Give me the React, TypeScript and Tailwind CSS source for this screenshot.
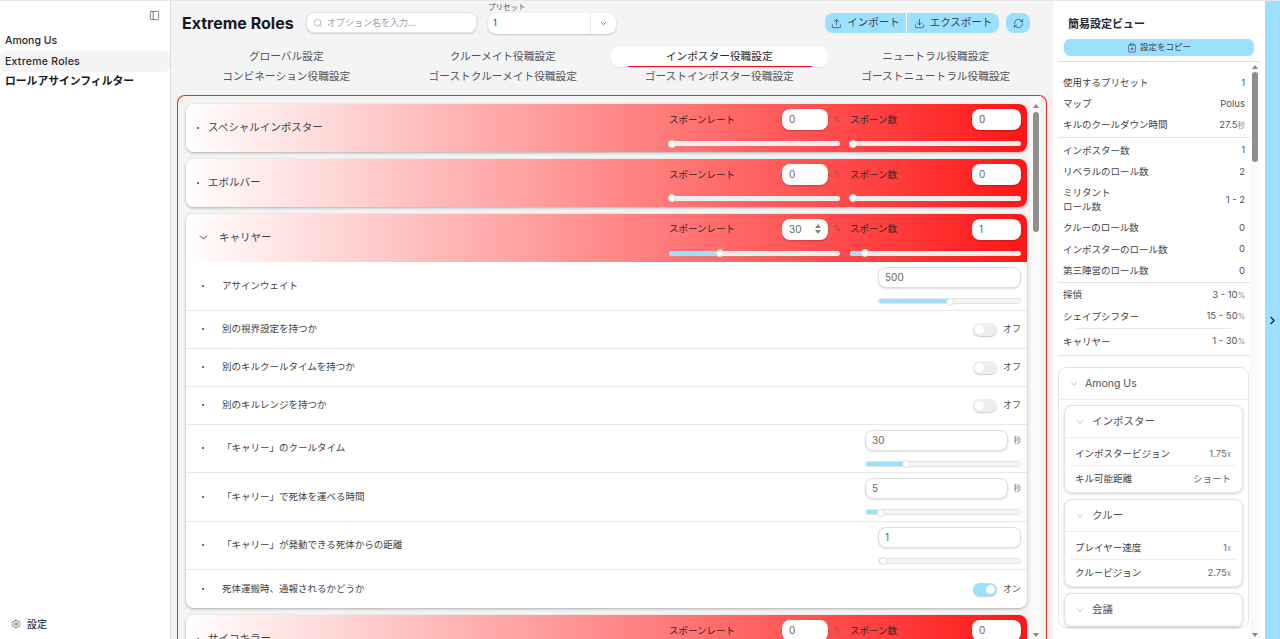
import { ChevronDown, ChevronRight, PanelLeft, Search, Settings, Upload, Download, RefreshCw, ClipboardPlus } from "lucide-react";
import type { ReactNode } from "react";

const FONT = { fontFamily: "Inter, 'Noto Sans CJK JP', sans-serif" };

function Slider({ pct, track = "bg-[#eeeeee]" }: { pct: number; track?: string }) {
  return (
    <div className={`relative h-[5px] w-full rounded-full ${track}`}>
      <div className="h-full rounded-full bg-[#9be0ff]" style={{ width: `${pct}%` }} />
      <div
        className="absolute top-[-1.5px] h-2 w-2 rounded-full border border-[#dddddd] bg-white"
        style={{ left: `calc(${pct}% - 4px)` }}
      />
    </div>
  );
}

function SpawnCol({ label, value, pct, unit, spin, inputClass }: { label: string; value: string; pct: number; unit?: string; spin?: boolean; inputClass: string }) {
  return (
    <div className="flex flex-col">
      <div className="flex h-[21px] items-center">
        <span className="flex-1 pt-[1px] text-[9.5px] text-[#27272a]">{label}</span>
        <div className={`flex h-[21px] items-center justify-between rounded-lg bg-white pl-[7px] pr-[7px] text-[10px] text-[#666666] shadow-[0_1px_2px_rgba(0,0,0,0.25)] ${inputClass}`}>
          <span>{value}</span>
          {spin && (
            <span className="flex flex-col gap-[2px]">
              <span className="h-0 w-0 border-x-[3px] border-b-[4px] border-x-transparent border-b-[#888888]" />
              <span className="h-0 w-0 border-x-[3px] border-t-[4px] border-x-transparent border-t-[#888888]" />
            </span>
          )}
        </div>
        {unit && <span className="ml-[5px] w-[7px] text-[7.5px] text-[#8a5a5a]">{unit}</span>}
      </div>
      <div className="mt-[11px]">
        <Slider pct={pct} track="bg-[#eeeeee]" />
      </div>
    </div>
  );
}

function RoleHead({ name, open, rate, num, ratePct, numPct, spin }: { name: string; open?: boolean; rate: string; num: string; ratePct: number; numPct: number; spin?: boolean }) {
  return (
    <div className={`flex shrink-0 items-start bg-[linear-gradient(90deg,#ffffff,#ff1616)] ${open ? "h-[48.5px] rounded-t-lg" : "h-[48px] rounded-lg shadow-[0_1px_3px_rgba(0,0,0,0.3)]"}`}>
      <div className="flex h-full flex-1 items-center text-[10.5px] text-[#3f3f46]">
        {open ? (
          <>
            <ChevronDown size={13} strokeWidth={1.8} className="ml-[11px] mr-[9px] text-[#3f3f46]" />
            <span>{name}</span>
          </>
        ) : (
          <>
            <span className="ml-[11px] mr-[9px] h-[2px] w-[2px] rounded-full bg-[#3f3f46]" />
            <span>{name}</span>
          </>
        )}
      </div>
      <div className="mr-[6px] mt-[5px] grid w-[352px] grid-cols-[171px_171px] gap-x-[10px]">
        <SpawnCol label="スポーンレート" value={rate} pct={ratePct} unit="%" spin={spin} inputClass="w-[46px]" />
        <SpawnCol label="スポーン数" value={num} pct={numPct} inputClass="w-[49px]" />
      </div>
    </div>
  );
}

function Row({ label, tall, children, last }: { label: string; tall?: boolean; children: ReactNode; last?: boolean }) {
  return (
    <div className={`flex items-center pl-[16px] pr-[6px] ${tall ? "h-[48.5px]" : "h-[38px]"} ${last ? "" : "border-b border-[#e8e8e8]"}`}>
      <span className="h-[2px] w-[2px] rounded-full bg-[#3f3f46]" />
      <span className="ml-[18px] flex-1 text-[9.5px] text-[#3f3f46]">{label}</span>
      {children}
    </div>
  );
}

function NumField({ value, pct, unit }: { value: string; pct: number; unit?: boolean }) {
  return (
    <div className={`flex flex-col ${unit ? "w-[156px]" : "w-[143px]"}`}>
      <div className="flex items-center">
        <div className={`flex h-[21px] items-center rounded-lg border border-[#dddddd] bg-white pl-[6px] text-[10px] text-[#666666] shadow-[0_1px_2px_rgba(0,0,0,0.12)] ${unit ? "w-[143px]" : "w-full"}`}>
          {value}
        </div>
        {unit && <span className="ml-auto text-[7.5px] text-[#777777]">秒</span>}
      </div>
      <div className="mt-[10px]">
        <div className="rounded-full border border-[#e4e4e4]">
          <Slider pct={pct} track="bg-[#f4f4f4] !h-[4px]" />
        </div>
      </div>
    </div>
  );
}

function Toggle({ on }: { on?: boolean }) {
  return (
    <div className="flex items-center">
      <div className={`flex h-[13px] w-[24px] items-center rounded-full px-[2px] shadow-[0_1px_1px_rgba(0,0,0,0.2)] ${on ? "justify-end bg-[#9be0ff]" : "justify-start bg-[#eeeeee]"}`}>
        <div className="h-[9px] w-[9px] rounded-full bg-white" />
      </div>
      <span className="ml-[6px] text-[9px] text-[#52525b]">{on ? "オン" : "オフ"}</span>
    </div>
  );
}

function Stat({ label, value, unit, tall }: { label: ReactNode; value: string; unit?: string; tall?: boolean }) {
  return (
    <div className={`flex items-center justify-between pl-[5px] pr-[5px] text-[9.5px] text-[#3f3f46] ${tall ? "h-[35px]" : "h-[21.3px]"}`}>
      <span className="leading-[13.5px]">{label}</span>
      <span className="text-[#52525b]">
        {value}
        {unit && <span className="text-[7.5px] text-[#888888]">{unit}</span>}
      </span>
    </div>
  );
}

function Group({ title, className = "", children }: { title: string; className?: string; children?: ReactNode }) {
  return (
    <div className={`rounded-lg border border-[#e4e4e4] bg-white shadow-[0_1px_3px_rgba(0,0,0,0.18)] ${className}`}>
      <div className="flex h-[32px] items-center border-b border-[#eeeeee] pl-[10px] text-[10.5px] text-[#52525b]">
        <ChevronDown size={10} strokeWidth={1.5} className="mr-[7px] text-[#999999]" />
        {title}
      </div>
      {children}
    </div>
  );
}

function Mini({ label, value, unit, line }: { label: string; value: string; unit?: string; line?: boolean }) {
  return (
    <div className={`mx-[5px] flex items-center justify-between pl-[5px] pr-[6px] text-[9.5px] text-[#3f3f46] ${line ? "h-[24px] border-b border-[#eeeeee]" : "h-[25px]"}`}>
      <span>{label}</span>
      <span className="text-[#666666]">
        {value}
        {unit && <span className="text-[7.5px] text-[#888888]">{unit}</span>}
      </span>
    </div>
  );
}

const TABS = ["グローバル設定", "クルーメイト役職設定", "インポスター役職設定", "ニュートラル役職設定", "コンビネーション役職設定", "ゴーストクルーメイト役職設定", "ゴーストインポスター役職設定", "ゴーストニュートラル役職設定"];

export default function App() {
  return (
    <div style={FONT} className="flex h-[639px] w-[1280px] overflow-hidden border-t border-[#e8e8e8] bg-white">
      {/* Left navigation */}
      <aside className="flex w-[171px] shrink-0 flex-col border-r border-[#dddddd] bg-white">
        <div className="flex h-[29px] items-center justify-end pr-[10px]">
          <PanelLeft size={11} strokeWidth={1.4} className="text-[#3f3f46]" />
        </div>
        <div className="flex h-[21px] items-center pl-[5px] text-[10.5px] font-medium text-[#27272a]">Among Us</div>
        <div className="flex h-[21px] items-center rounded-md bg-[#f4f4f4] pl-[5px] text-[10.5px] font-medium tracking-[0.25px] text-[#27272a]">Extreme Roles</div>
        <div className="flex h-[21px] items-center pl-[5px] text-[10.8px] font-bold text-[#18181b]">ロールアサインフィルター</div>
        <div className="mt-auto flex h-[30px] items-center pl-[11px] text-[10px] font-medium text-[#3f3f46]">
          <Settings size={10} strokeWidth={1.6} className="mr-[6px]" />
          設定
        </div>
      </aside>

      {/* Main column */}
      <main className="flex min-w-0 w-[882px] shrink-0 flex-col bg-[#f4f4f4]">
        <div className="flex h-[46px] shrink-0 items-start pl-[11px]">
          <h1 className="mt-[11px] w-[124px] text-[16px] font-bold leading-[22px] text-[#18181b]">Extreme Roles</h1>
          <div className="mt-[11px] flex h-[21px] w-[171px] items-center rounded-lg border border-[#e4e4e4] bg-white pl-[6px] text-[9px] text-[#a1a1aa] shadow-[0_1px_2px_rgba(0,0,0,0.15)]">
            <Search size={10} strokeWidth={1.4} className="mr-[4px] text-[#999999]" />
            オプション名を入力...
          </div>
          <div className="ml-[11px] w-[128px]">
            <div className="mt-[1px] h-[11px] text-[7.5px] leading-[11px] text-[#52525b]">プリセット</div>
            <div className="flex h-[21px] items-center rounded-lg bg-white text-[9.5px] text-[#3f3f46] shadow-[0_1px_2px_rgba(0,0,0,0.2)]">
              <span className="flex-1 pl-[5px]">1</span>
              <span className="flex h-full w-[26px] items-center justify-center border-l border-[#e8e8e8]">
                <ChevronDown size={9} strokeWidth={1.8} />
              </span>
            </div>
          </div>
          <div className="ml-auto mr-[23px] mt-[12px] flex items-center gap-[7px]">
            <div className="flex h-[20px] w-[174px] overflow-hidden rounded-lg bg-[#9be0ff] text-[10.5px] text-[#3f3f46]">
              <div className="flex w-[82px] items-center justify-center gap-[5px] border-r border-white">
                <Upload size={11} strokeWidth={1.6} />
                インポート
              </div>
              <div className="flex flex-1 items-center justify-center gap-[5px]">
                <Download size={11} strokeWidth={1.6} />
                エクスポート
              </div>
            </div>
            <div className="flex h-[20px] w-[24px] items-center justify-center rounded-lg bg-[#9be0ff] text-[#3f3f46]">
              <RefreshCw size={11} strokeWidth={1.6} />
            </div>
          </div>
        </div>

        <div className="ml-[7px] mr-[9px] grid h-[40px] shrink-0 grid-cols-4 grid-rows-2 text-[10.7px] text-[#52525b]">
          {TABS.map((t) =>
            t === "インポスター役職設定" ? (
              <div key={t} className="relative flex items-center justify-center rounded-lg bg-white text-[#27272a] shadow-[0_1px_1px_rgba(0,0,0,0.06)]">
                {t}
                <span className="absolute bottom-0 left-[17px] right-[16px] h-px bg-[#f01010]" />
              </div>
            ) : (
              <div key={t} className="flex items-center justify-center">{t}</div>
            )
          )}
        </div>

        {/* Roles panel */}
        <div className="ml-[6px] mr-[6px] mt-[8px] flex min-h-0 flex-1 overflow-hidden rounded-t-lg border border-b-0 border-[#ff2020] pl-[8px] pt-[8px]">
          <div className="flex min-w-0 flex-1 flex-col gap-[6.75px] pr-[4px]">
            <RoleHead name="スペシャルインポスター" rate="0" num="0" ratePct={2} numPct={2} />
            <RoleHead name="エボルバー" rate="0" num="0" ratePct={2} numPct={2} />
            <div className="shrink-0 rounded-lg bg-white shadow-[0_1px_3px_rgba(0,0,0,0.3)]">
              <RoleHead open name="キャリヤー" rate="30" num="1" ratePct={30} numPct={9} spin />
              <Row label="アサインウェイト" tall><NumField value="500" pct={50} /></Row>
              <Row label="別の視界設定を持つか"><Toggle /></Row>
              <Row label="別のキルクールタイムを持つか"><Toggle /></Row>
              <Row label="別のキルレンジを持つか"><Toggle /></Row>
              <Row label="「キャリー」のクールタイム" tall><NumField value="30" pct={26} unit /></Row>
              <Row label="「キャリー」で死体を運べる時間" tall><NumField value="5" pct={10} unit /></Row>
              <Row label="「キャリー」が発動できる死体からの距離" tall><NumField value="1" pct={3} /></Row>
              <Row label="死体運搬時、通報されるかどうか" last><Toggle on /></Row>
            </div>
            <RoleHead name="サイコキラー" rate="0" num="0" ratePct={2} numPct={2} />
          </div>
          <div className="relative -mt-[8px] mr-[5px] flex w-[10px] shrink-0 justify-center bg-[#fafafa] pt-[8px]">
            <div className="flex flex-col items-center">
              <div className="h-0 w-0 border-x-[3.5px] border-b-[4px] border-x-transparent border-b-[#888888]" />
              <div className="mt-[4px] h-[120px] w-[6px] rounded-full bg-[#8f8f8f]" />
            </div>
            <div className="absolute bottom-[2px] h-0 w-0 border-x-[3.5px] border-t-[4px] border-x-transparent border-t-[#888888]" />
          </div>
        </div>
      </main>

      {/* Quick view */}
      <aside className="flex w-[212px] shrink-0 flex-col bg-white">
        <div className="flex h-[38px] shrink-0 items-center pl-[15px] pt-[8px] text-[11px] font-semibold text-[#27272a]">簡易設定ビュー</div>
        <div className="mx-[11px] flex h-[17px] shrink-0 items-center justify-center gap-[3px] rounded-md bg-[#9be0ff] text-[8.5px] text-[#3f3f46]">
          <ClipboardPlus size={10} strokeWidth={1.6} />
          設定をコピー
        </div>
        <div className="mx-[5px] mt-[5px] flex min-h-0 flex-1 border-t border-[#dddddd]">
          <div className="min-w-0 flex-1">
            <div className="border-b border-[#e2e2e2] pb-[1px] pt-[10px]">
              <Stat label="使用するプリセット" value="1" />
              <Stat label="マップ" value="Polus" />
              <Stat label="キルのクールダウン時間" value="27.5" unit="秒" />
            </div>
            <div className="border-b border-[#e2e2e2] pb-[1px] pt-[2px]">
              <Stat label="インポスター数" value="1" />
              <Stat label="リベラルのロール数" value="2" />
              <Stat label={<>ミリタント<br />ロール数</>} value="1 - 2" tall />
              <Stat label="クルーのロール数" value="0" />
              <Stat label="インポスターのロール数" value="0" />
              <Stat label="第三陣営のロール数" value="0" />
            </div>
            <div className="border-b border-[#e2e2e2] pb-[3px] pt-[1px]">
              <Stat label="探偵" value="3 - 10" unit="%" />
              <Stat label="シェイプシフター" value="15 - 50" unit="%" />
              <div className="mx-[19px] mb-[2px] mt-[1px] border-t border-[#e8e8e8]" />
              <Stat label="キャリヤー" value="1 - 30" unit="%" />
            </div>
            <div className="mr-[1px] mt-[11px] rounded-lg border border-[#e4e4e4] bg-white">
              <div className="flex h-[32px] items-center border-b border-[#eeeeee] pl-[10px] text-[10.5px] text-[#52525b]">
                <ChevronDown size={10} strokeWidth={1.5} className="mr-[6px] text-[#999999]" />
                Among Us
              </div>
              <div className="flex flex-col gap-[6px] px-[5px] pt-[5px]">
                <Group title="インポスター">
                  <div className="pb-[1px] pt-[4px]">
                    <Mini label="インポスタービジョン" value="1.75" unit="x" line />
                    <Mini label="キル可能距離" value="ショート" />
                  </div>
                </Group>
                <Group title="クルー">
                  <div className="pb-[1px] pt-[4px]">
                    <Mini label="プレイヤー速度" value="1" unit="x" line />
                    <Mini label="クルービジョン" value="2.75" unit="x" />
                  </div>
                </Group>
                <Group title="会議" />
              </div>
            </div>
          </div>
          <div className="relative flex w-[10px] shrink-0 justify-center bg-[#fafafa] pt-[3px]">
            <div className="flex flex-col items-center">
              <div className="h-0 w-0 border-x-[3px] border-b-[4px] border-x-transparent border-b-[#888888]" />
              <div className="mt-[3px] h-[90px] w-[6px] rounded-full bg-[#8f8f8f]" />
            </div>
            <div className="absolute bottom-[2px] h-0 w-0 border-x-[3px] border-t-[4px] border-x-transparent border-t-[#888888]" />
          </div>
        </div>
      </aside>

      {/* Collapse strip */}
      <div className="flex w-[15px] shrink-0 items-center justify-center bg-[#9be0ff] text-[#18181b]">
        <ChevronRight size={13} strokeWidth={2} />
      </div>
    </div>
  );
}
